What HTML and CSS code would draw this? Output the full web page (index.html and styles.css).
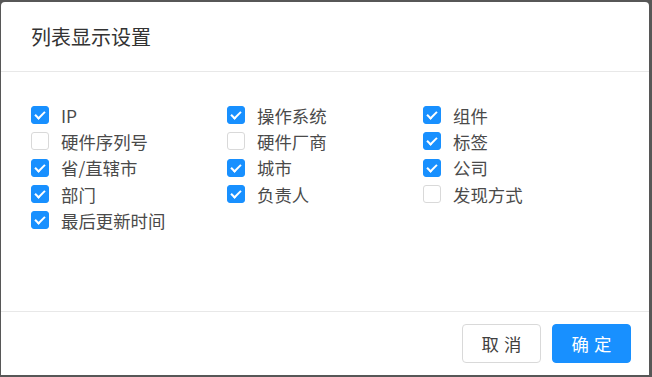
FILE: index.html
```html
<!DOCTYPE html>
<html lang="zh-CN">
<head>
    <meta charset="UTF-8">
    <meta name="viewport" content="width=device-width, initial-scale=1.0">
    <title>列表显示设置</title>
    <link rel="stylesheet" href="styles.css">
</head>
<body>

<div class="modal">
    <div class="modal-header">
        <h2>列表显示设置</h2>
    </div>

    <div class="modal-body">
        <div class="columns">
            <label class="check"><span class="box checked"></span>IP</label>
            <label class="check"><span class="box checked"></span>操作系统</label>
            <label class="check"><span class="box checked"></span>组件</label>

            <label class="check"><span class="box"></span>硬件序列号</label>
            <label class="check"><span class="box"></span>硬件厂商</label>
            <label class="check"><span class="box checked"></span>标签</label>

            <label class="check"><span class="box checked"></span>省/直辖市</label>
            <label class="check"><span class="box checked"></span>城市</label>
            <label class="check"><span class="box checked"></span>公司</label>

            <label class="check"><span class="box checked"></span>部门</label>
            <label class="check"><span class="box checked"></span>负责人</label>
            <label class="check"><span class="box"></span>发现方式</label>

            <label class="check"><span class="box checked"></span>最后更新时间</label>
        </div>
    </div>

    <div class="modal-footer">
        <button class="btn">取消</button>
        <button class="btn primary">确定</button>
    </div>
</div>

</body>
</html>
```

FILE: styles.css
```css
body {
    margin: 0;
    padding: 2px 3px 0 1px;
    background: #575757;
    font-family: "Noto Sans CJK SC", "Noto Sans", sans-serif;
    color: #404040;
    height: 100vh;
    box-sizing: border-box;
    overflow: hidden;
}

.modal {
    background: #fff;
    border-radius: 4px 4px 0 0;
}

.modal-header {
    padding: 20px 30px 20px;
    border-bottom: 1px solid #e8e8e8;
}

.modal-header h2 {
    margin: 0;
    font-size: 20px;
    line-height: 29px;
    font-weight: normal;
    color: #333;
}

.modal-body {
    padding: 30px 30px 78px;
}

.columns {
    display: grid;
    grid-template-columns: repeat(3, 1fr);
}

.check {
    display: flex;
    align-items: center;
    height: 26.3px;
    font-size: 17.4px;
    color: #4a4a4a;
}

.box {
    width: 16px;
    height: 16px;
    border: 1px solid #d9d9d9;
    border-radius: 3px;
    background: #fff;
    margin-right: 12px;
    position: relative;
    flex-shrink: 0;
}

.box.checked {
    background: #1890ff;
    border-color: #1890ff;
}

/* check mark */
.box.checked::after {
    content: "";
    position: absolute;
    left: 5px;
    top: 2px;
    width: 4px;
    height: 8px;
    border: solid #fff;
    border-width: 0 2.5px 2.5px 0;
    transform: rotate(45deg);
}

.modal-footer {
    border-top: 1px solid #e8e8e8;
    padding: 12px 18px 12px;
    display: flex;
    justify-content: flex-end;
    gap: 11px;
}

.btn {
    width: 79px;
    height: 39px;
    font-family: inherit;
    font-size: 17.4px;
    letter-spacing: 0.3em;
    padding: 0 0 0 0.3em;
    border: 1px solid #d9d9d9;
    border-radius: 4px;
    background: #fff;
    color: #404040;
    cursor: pointer;
}

.btn.primary {
    background: #1890ff;
    border-color: #1890ff;
    color: #fff;
}
```
